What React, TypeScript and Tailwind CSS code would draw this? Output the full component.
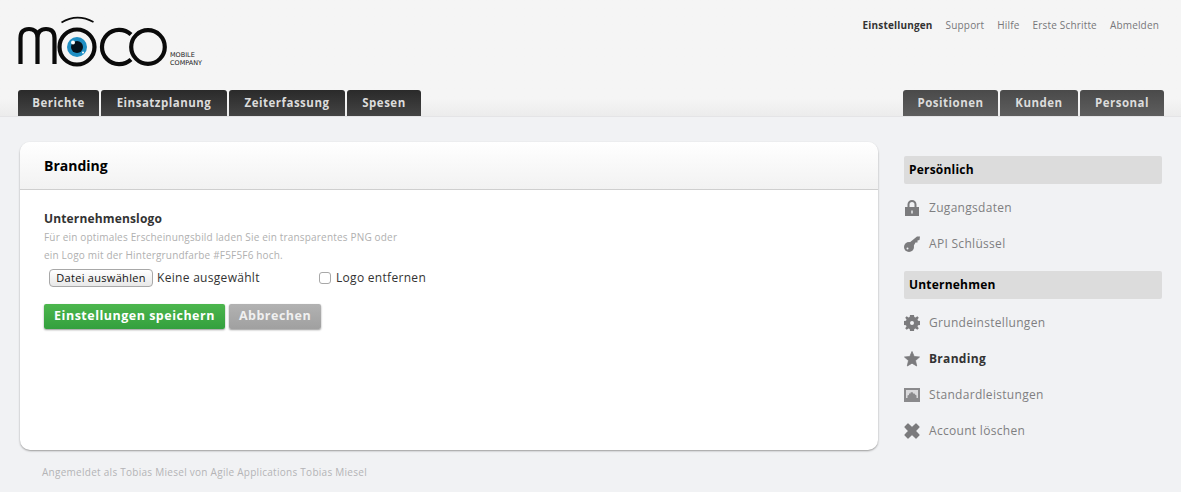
import React from 'react'

const font = "font-['Open_Sans',sans-serif]"

// --- Logo ---

function Logo() {
  return (
    <svg width="190" height="54" viewBox="0 0 190 54" className="block">
      <g fill="none" stroke="#0a0a0a">
        <path d="M2.500 50V24Q2.500 15 11 15Q19.500 15 19.500 24V50M19.500 24Q19.500 15 28 15Q36.500 15 36.500 24V50" strokeWidth="4.200" />
        <circle cx="59" cy="33" r="17.500" strokeWidth="4.200" />
        <path d="M113 20.500A17.200 17.200 0 1 0 113 45.500" strokeWidth="4.200" />
        <circle cx="130" cy="33" r="16.800" strokeWidth="4.200" />
        <path d="M43.500 8.500Q59 -1 75.500 8" strokeWidth="1.700" />
      </g>
      <circle cx="59" cy="33" r="10" fill="#1f8fc4" />
      <circle cx="59" cy="33" r="6" fill="#06121c" />
      <circle cx="55" cy="28.500" r="2" fill="#fff" />
      <circle cx="65" cy="38.500" r="1" fill="#fff" />
      <text x="152" y="42.500" fontSize="6.500" fill="#222" fontFamily="'DejaVu Sans',sans-serif">MOBILE</text>
      <text x="152" y="50.500" fontSize="6.500" fill="#222" fontFamily="'DejaVu Sans',sans-serif">COMPANY</text>
    </svg>
  )
}

// --- Sidebar icons ---

function LockIcon() {
  return (
    <svg width="16" height="16" viewBox="0 0 16 16" fill="#7b7b7d">
      <path d="M1 7H3.500V4.500A4.500 4.500 0 0 1 12.500 4.500V7H15V16H1ZM5.500 7H10.500V4.500A2.500 2.500 0 0 0 5.500 4.500Z" fillRule="evenodd" />
      <rect x="7.300" y="10.500" width="1.400" height="3" fill="#f1f2f4" />
    </svg>
  )
}

function KeyIcon() {
  return (
    <svg width="16" height="16" viewBox="0 0 16 16" fill="#7b7b7d">
      <circle cx="5" cy="11" r="5" />
      <path d="M5 7L13 0.500L16 0.500L15.500 4L13.500 4.500V6.500H11.500L9 11Z" />
      <circle cx="3.500" cy="12.500" r="1" fill="#f1f2f4" />
    </svg>
  )
}

function GearIcon() {
  return (
    <svg width="16" height="16" viewBox="0 0 16 16" fill="#7b7b7d">
      <path
        fillRule="evenodd"
        d="M6 0H10L10.300 2L11.600 2.500L13.300 1.200L14.800 2.700L13.500 4.400L14 5.700L16 6V10L14 10.300L13.500 11.600L14.800 13.300L13.300 14.800L11.600 13.500L10.300 14L10 16H6L5.700 14L4.400 13.500L2.700 14.800L1.200 13.300L2.500 11.600L2 10.300L0 10V6L2 5.700L2.500 4.400L1.200 2.700L2.700 1.200L4.400 2.500L5.700 2ZM8 6A2 2 0 1 0 8 10A2 2 0 1 0 8 6Z"
      />
    </svg>
  )
}

function StarIcon() {
  return (
    <svg width="16" height="16" viewBox="0 0 16 16" fill="#7b7b7d" stroke="#7b7b7d" strokeWidth="0.800" strokeLinejoin="round">
      <path d="M8 0.500L10.200 5.500L15.500 6L11.500 9.600L12.700 15L8 12.200L3.300 15L4.500 9.600L0.500 6L5.800 5.500Z" />
    </svg>
  )
}

function PictureIcon() {
  return (
    <svg width="16" height="16" viewBox="0 0 16 16" fill="#8a8a8c">
      <path fillRule="evenodd" d="M0 1H16V15H0ZM2 3V11H14V3Z" />
      <rect x="2" y="3" width="12" height="8" fill="#dadadc" />
      <path d="M3.500 11V8.500L5 8V6.500L6.500 6.500V5.500L8.500 5L9 6.500H10.500L11 7.500L12.500 8.500V11Z" />
    </svg>
  )
}

function CrossIcon() {
  return (
    <svg width="16" height="16" viewBox="0 0 16 16" fill="#7b7b7d" stroke="#7b7b7d" strokeWidth="1.200" strokeLinejoin="round">
      <path d="M4 1L8 4.800L12 1L15 4L11.200 8L15 12L12 15L8 11.200L4 15L1 12L4.800 8L1 4Z" />
    </svg>
  )
}

// --- Tabs ---

function Tab({ label, width, light }: { label: string; width: string; light?: boolean }) {
  return (
    <a
      className={`flex h-[26px] items-center justify-center rounded-t-[3px] text-[11.500px] font-bold tracking-[0.5px] text-[#dcdcdc] ${width} ${
        light ? 'bg-gradient-to-b from-[#4a4a4a] to-[#5e5e5e]' : 'bg-gradient-to-b from-[#2a2a2a] to-[#444444]'
      }`}
    >
      {label}
    </a>
  )
}

// --- Sidebar parts ---

function SideHeading({ children }: { children: React.ReactNode }) {
  return (
    <h3 className="flex h-[28px] items-center rounded-[2px] bg-[#dcdcdc] pl-[5px] text-[12px] font-bold tracking-[0.2px] text-black">
      {children}
    </h3>
  )
}

function SideItem({ icon, label, active }: { icon: React.ReactNode; label: string; active?: boolean }) {
  return (
    <a className={`flex h-[36px] items-center gap-[9px] text-[12px] tracking-[0.3px] ${active ? 'font-bold text-[#333333]' : 'text-[#7f7f81]'}`}>
      <span className="block w-4 shrink-0">{icon}</span>
      {label}
    </a>
  )
}

export default function App() {
  return (
    <div className={`flex h-[492px] w-[1181px] flex-col overflow-hidden bg-[#f1f2f4] ${font}`}>
      <header className="flex h-[116px] shrink-0 flex-col justify-between bg-gradient-to-b from-[#f5f5f5] from-85% to-[#ececec] pl-[18px] pr-[17px]">
        <div className="flex items-start justify-between">
          <div className="pt-[14px]">
            <Logo />
          </div>
          <nav className="flex gap-[13px] pr-[5px] pt-[18px] text-[10px] leading-[15px] tracking-[0.17px] text-[#77777a]">
            <a className="font-bold text-[#333333]">Einstellungen</a>
            <a>Support</a>
            <a>Hilfe</a>
            <a>Erste Schritte</a>
            <a>Abmelden</a>
          </nav>
        </div>
        <div className="flex justify-between">
          <div className="flex gap-[2px]">
            <Tab label="Berichte" width="w-[81px]" />
            <Tab label="Einsatzplanung" width="w-[126px]" />
            <Tab label="Zeiterfassung" width="w-[116px]" />
            <Tab label="Spesen" width="w-[74px]" />
          </div>
          <div className="flex gap-[2px]">
            <Tab label="Positionen" width="w-[95px]" light />
            <Tab label="Kunden" width="w-[78px]" light />
            <Tab label="Personal" width="w-[84px]" light />
          </div>
        </div>
      </header>

      <div className="flex border-t border-[#e4e4e6] pl-[20px] pr-[19px] pt-[25px]">
        <div className="w-[858px] shrink-0">
          <main className="flex h-[308px] flex-col rounded-[10px] bg-white shadow-[0_1px_2px_#9a9a9a]">
            <div className="flex h-[48px] shrink-0 items-center rounded-t-[10px] border-b border-[#cfcfcf] bg-gradient-to-b from-white to-[#f2f2f2] pl-[24px] text-[14px] font-bold text-black">
              Branding
            </div>
            <div className="pl-[24px] pt-[22px]">
              <h4 className="text-[12px] font-bold leading-[14px] tracking-[0.15px] text-[#333333]">Unternehmenslogo</h4>
              <p className="mt-[2px] text-[10px] leading-[18px] tracking-[0.18px] text-[#b0b0b0]">
                Für ein optimales Erscheinungsbild laden Sie ein transparentes PNG oder
                <br />
                ein Logo mit der Hintergrundfarbe #F5F5F6 hoch.
              </p>
              <div className="mt-[4px] flex h-[20px] items-center pl-[5px] text-[12px] tracking-[0.3px] text-[#333333]">
                <button className="h-[18px] w-[104px] rounded-[4px] border border-[#a8a8a8] bg-gradient-to-b from-white to-[#e8e8e8] text-[11px] text-[#111111]">
                  Datei auswählen
                </button>
                <span className="ml-[4px] w-[162px]">Keine ausgewählt</span>
                <input type="checkbox" className="h-[12px] w-[12px] appearance-none rounded-[3px] border border-[#a8a8a8] bg-white" />
                <label className="ml-[5px]">Logo entfernen</label>
              </div>
              <div className="mt-[16px] flex gap-[4px]">
                <button className="h-[25px] w-[181px] rounded-[2px] bg-gradient-to-b from-[#4cb64d] to-[#33a03e] text-[12.500px] font-bold tracking-[0.5px] text-white shadow-[0_1px_2px_#999999]">
                  Einstellungen speichern
                </button>
                <button className="h-[25px] w-[92px] rounded-[2px] bg-gradient-to-b from-[#b2b2b2] to-[#a0a0a0] text-[12.500px] font-bold tracking-[0.5px] text-[#f0f0f0] shadow-[0_1px_2px_#999999]">
                  Abbrechen
                </button>
              </div>
            </div>
          </main>
          <footer className="pl-[22px] pt-[15px] text-[10px] leading-[14px] tracking-[0.27px] text-[#b4b4b6]">
            Angemeldet als Tobias Miesel von Agile Applications Tobias Miesel
          </footer>
        </div>

        <aside className="ml-[26px] w-[258px] pt-[14px]">
          <SideHeading>Persönlich</SideHeading>
          <div className="mt-[6px] mb-[9px]">
            <SideItem icon={<LockIcon />} label="Zugangsdaten" />
            <SideItem icon={<KeyIcon />} label="API Schlüssel" />
          </div>
          <SideHeading>Unternehmen</SideHeading>
          <div className="mt-[6px]">
            <SideItem icon={<GearIcon />} label="Grundeinstellungen" />
            <SideItem icon={<StarIcon />} label="Branding" active />
            <SideItem icon={<PictureIcon />} label="Standardleistungen" />
            <SideItem icon={<CrossIcon />} label="Account löschen" />
          </div>
        </aside>
      </div>
    </div>
  )
}
